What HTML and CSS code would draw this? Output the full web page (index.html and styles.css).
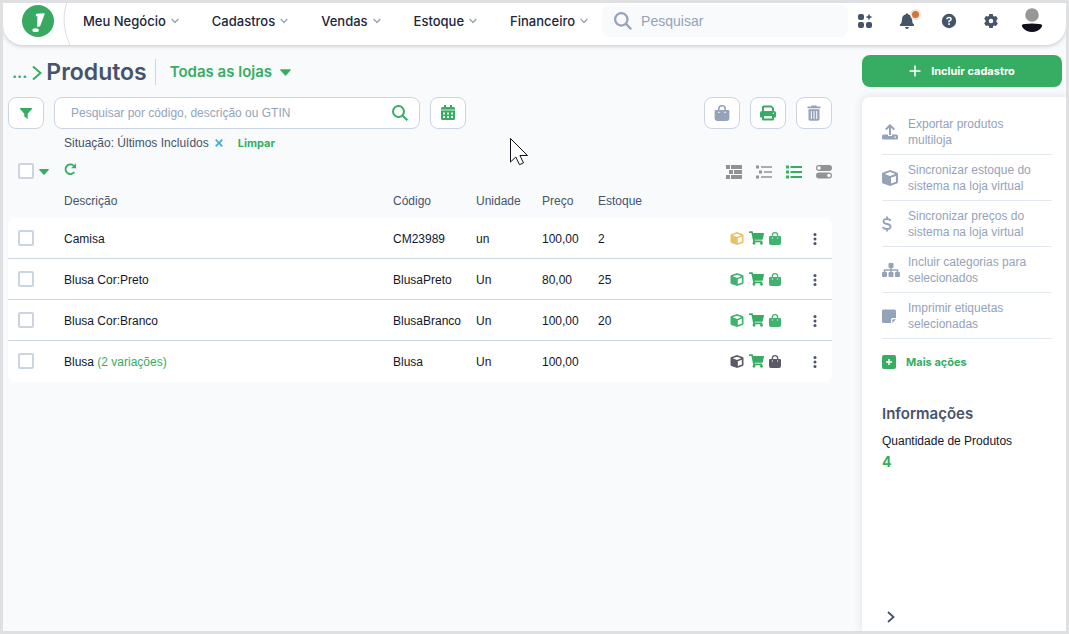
FILE: index.html
```html
<!DOCTYPE html>
<html lang="pt-BR">
<head>
<meta charset="utf-8">
<meta name="viewport" content="width=device-width, initial-scale=1">
<title>Produtos</title>
<link rel="stylesheet" href="styles.css">
</head>
<body>
<svg class="sprite" aria-hidden="true">
  <symbol id="chev" viewBox="0 0 8 6"><path d="M.7 1l3.300 3.500L7.300 1" fill="none" stroke="currentColor" stroke-width="1.300"/></symbol>
  <symbol id="caret" viewBox="0 0 10 6"><path d="M.5 0h9q.7.3.2.9L5.6 5.6q-.6.6-1.2 0L.3.9Q-.2.3.5 0z"/></symbol>
  <symbol id="search" viewBox="0 0 16 16"><path d="M11 11l4.300 4.300M12 6.500a5.500 5.500 0 1 1-11 0a5.500 5.500 0 0 1 11 0z" fill="none" stroke="currentColor" stroke-width="2"/></symbol>
  <symbol id="box" viewBox="0 0 16 16"><path fill-rule="evenodd" d="M7.300.2Q8 0 8.700.2L15 2.500q1 .4 1 1.500v8q0 1-1 1.500l-6.300 2.300q-.7.300-1.400 0L1 13.500q-1-.5-1-1.500V4q0-1.100 1-1.500zM8 2L2.700 4 8 6l5.300-2zM9 7.800v5.800l5-1.900V5.900z"/></symbol>
  <symbol id="cart" viewBox="0 0 576 512"><path d="M528.120 301.319l47.273-208C578.806 78.301 567.391 64 551.990 64H159.208l-9.166-44.810C147.758 8.021 137.930 0 126.529 0H24C10.745 0 0 10.745 0 24v16c0 13.255 10.745 24 24 24h69.883l70.248 343.435C147.325 417.100 136 435.222 136 456c0 30.928 25.072 56 56 56s56-25.072 56-56c0-15.674-6.447-29.835-16.824-40h209.647C430.447 426.165 424 440.326 424 456c0 30.928 25.072 56 56 56s56-25.072 56-56c0-22.172-12.888-41.332-31.579-50.405l5.517-24.276c3.413-15.018-8.002-29.319-23.403-29.319H218.117l-6.545-32h293.145c11.206 0 20.920-7.754 23.403-18.681z"/></symbol>
  <symbol id="bag" viewBox="0 0 12 13"><path fill-rule="evenodd" d="M2.700 4V3.300a3.300 3.300 0 0 1 6.600 0V4H11q1 0 1 1v6q0 2-2 2H2q-2 0-2-2V5q0-1 1-1zM4 4h4V3.300a2 2 0 0 0-4 0zM2.900 5.500v1h1.100v-1zM8 5.500v1h1.100v-1z"/></symbol>
  <symbol id="dots" viewBox="0 0 4 12"><circle cx="2" cy="1.600" r="1.500"/><circle cx="2" cy="6" r="1.500"/><circle cx="2" cy="10.400" r="1.500"/></symbol>
  <symbol id="plus" viewBox="0 0 12 12"><path d="M6 .5v11M.5 6h11" fill="none" stroke="currentColor" stroke-width="1.500"/></symbol>
</svg>

<header class="topbar">
  <a class="logo" href="#" aria-label="Início"><svg viewBox="0 0 32 32"><circle cx="16" cy="16" r="16" fill="#38a962"/><path d="M14.300 8.700l7.900-.5q.8 0 .5.800l-4.500 12.100q-.3.500-.8.500l-1.900.1q-.5 0-.4-.5l.3-10-1.800.1z" fill="#fff"/><ellipse cx="13.600" cy="25.200" rx="3.200" ry="1.900" fill="#fff"/></svg></a>
  <svg class="curve" viewBox="0 0 8 42" aria-hidden="true"><path d="M3.500 0Q-3 21 7 42" fill="none" stroke="#d9dee6"/></svg>
  <nav class="menu">
    <button type="button">Meu Negócio <svg><use href="#chev"/></svg></button>
    <button type="button">Cadastros <svg><use href="#chev"/></svg></button>
    <button type="button">Vendas <svg><use href="#chev"/></svg></button>
    <button type="button">Estoque <svg><use href="#chev"/></svg></button>
    <button type="button">Financeiro <svg><use href="#chev"/></svg></button>
  </nav>
  <label class="global-search"><svg><use href="#search"/></svg><input type="text" placeholder="Pesquisar" aria-label="Pesquisar"></label>
  <div class="tools">
    <button type="button" aria-label="Aplicativos"><svg viewBox="0 0 16 16"><rect x="1" y="1" width="6" height="6" rx="2"/><rect x="1" y="9" width="6" height="6" rx="2"/><rect x="9" y="9" width="6" height="6" rx="2"/><path d="M12 .5l1 2.500 2.500 1-2.500 1-1 2.500-1-2.500-2.500-1L11 3z"/></svg></button>
    <button type="button" class="bell" aria-label="Notificações"><svg viewBox="0 0 16 16"><path d="M7 1.200a1 1 0 0 1 2 0Q13 2 13 6.500q0 3.500 2 5 .5 1.500-.8 1.500H1.800Q.5 13 1 11.500q2-1.500 2-5Q3 2 7 1.200zM6 14h4q-.3 2-2 2t-2-2z"/></svg><span class="badge"></span></button>
    <button type="button" aria-label="Ajuda"><svg viewBox="0 0 16 16"><circle cx="8" cy="8" r="7.200"/><path d="M5.900 6.300Q6 4.400 8 4.400t2.200 1.700Q10.200 7.200 8 8.200v1" fill="none" stroke="#fff" stroke-width="1.500"/><rect x="7.200" y="10.200" width="1.700" height="1.700" fill="#fff"/></svg></button>
    <button type="button" aria-label="Configurações"><svg viewBox="0 0 16 16"><path fill-rule="evenodd" d="M6.300 1h3.400l.5 2 .9.500 2-.6 1.700 2.900-1.400 1.500v1.400l1.400 1.500-1.700 2.900-2-.6-.9.500-.5 2H6.300l-.5-2-.9-.5-2 .6-1.700-2.900 1.400-1.500V7.300L1.200 5.800l1.700-2.900 2 .6.900-.5zM8 5.700a2.300 2.300 0 1 0 0 4.600 2.300 2.300 0 0 0 0-4.600z"/></svg></button>
    <button type="button" class="avatar" aria-label="Conta"><svg viewBox="0 0 22 26"><circle cx="11" cy="7" r="6.800" fill="#979797"/><path d="M1 17q1-1.500 10-1.500T21 17q.7 1.200-1 3-3.500 4-9 4t-9-4q-1.700-1.800-1-3z" fill="#11101d"/></svg></button>
  </div>
</header>

<div class="page">
  <main class="main">
    <div class="title-row">
      <a class="crumb" href="#">...</a>
      <svg class="crumb-arrow" viewBox="0 0 10 16"><path d="M1 1.500L8.500 8 1 14.500" fill="none" stroke="currentColor" stroke-width="2"/></svg>
      <h1>Produtos</h1>
      <button type="button" class="stores">Todas as lojas <svg><use href="#caret"/></svg></button>
    </div>

    <div class="filters">
      <button type="button" class="square" aria-label="Filtrar"><svg viewBox="0 0 16 16"><path d="M2.500 3h11q1 .2.500 1l-4.300 4.700v5.300L6.300 11.500V8.700L2 4q-.5-.8.500-1z"/></svg></button>
      <label class="search"><input type="text" placeholder="Pesquisar por código, descrição ou GTIN" aria-label="Pesquisar produtos"><svg><use href="#search"/></svg></label>
      <button type="button" class="square" aria-label="Calendário"><svg viewBox="0 0 16 16"><path d="M4 0h2v2h4V0h2v2h1.500Q15 2 15 3.500v1H1v-1Q1 2 2.500 2H4z"/><rect x="1" y="4.500" width="14" height="1.500" opacity=".6"/><path fill-rule="evenodd" d="M1 6h14v7.500q0 1.500-1.500 1.500h-11Q1 15 1 13.500zM3 7.500v2h2v-2zM7 7.500v2h2v-2zM11 7.500v2h2v-2zM3 11v2h2v-2zM7 11v2h2v-2zM11 11v2h2v-2z"/></svg></button>
      <div class="bulk">
        <button type="button" class="square muted" aria-label="Loja virtual"><svg><use href="#bag"/></svg></button>
        <button type="button" class="square" aria-label="Imprimir"><svg viewBox="0 0 16 16"><path fill-rule="evenodd" d="M2 6V2Q2 .5 3.500.5h8L14 3v3q2 0 2 2v3.500q0 1-1 1h-1v2q0 1-1 1H3q-1 0-1-1v-2H1q-1 0-1-1V8q0-2 2-2zM4 6h8V3.500L11 2.500H4zM4 11v2.500h8V11zM12.800 7.700v1.300h1.200V7.700z"/></svg></button>
        <button type="button" class="square muted" aria-label="Excluir"><svg viewBox="0 0 16 16"><path fill-rule="evenodd" d="M1.500 1.500H5l.8-1h4.400l.8 1h3.500v1.700h-13zM2.500 4.200h11V14q0 1.700-1.700 1.700H4.200Q2.500 15.700 2.500 14zM4.800 6v8h1V6zM7.500 6v8h1V6zM10.200 6v8h1V6z"/></svg></button>
      </div>
    </div>

    <div class="applied">
      <span>Situação: Últimos Incluídos</span>
      <button type="button" class="remove" aria-label="Remover filtro"><svg viewBox="0 0 8 8"><path d="M.7.7l6.600 6.600M7.300.7L.7 7.300" fill="none" stroke="currentColor" stroke-width="1.800"/></svg></button>
      <button type="button" class="clear">Limpar</button>
    </div>

    <div class="list-tools">
      <input type="checkbox" class="check" aria-label="Selecionar todos">
      <button type="button" class="select-menu" aria-label="Opções de seleção"><svg><use href="#caret"/></svg></button>
      <button type="button" class="refresh" aria-label="Atualizar"><svg viewBox="0 0 12 12"><path d="M9.600 2.700A4.800 4.800 0 1 0 10.300 9" fill="none" stroke="currentColor" stroke-width="1.800"/><path d="M12 .3v4.900H7.200z"/></svg></button>
      <div class="views">
        <button type="button" aria-label="Blocos"><svg viewBox="0 0 16 14"><path d="M0 0h4v4H0zM5 0h11v4H5zM3 5h4v4H3zM8 5h8v4H8zM0 10h4v4H0zM5 10h11v4H5z"/></svg></button>
        <button type="button" aria-label="Hierarquia"><svg viewBox="0 0 16 14"><path d="M0 .5h3v3H0zM5 1.200h11v1.500H5zM3 5.500h3v3H3zM8 6.200h8v1.500H8zM0 10.500h3v3H0zM5 11.200h11v1.500H5z"/></svg></button>
        <button type="button" class="active" aria-label="Lista"><svg viewBox="0 0 16 14"><path d="M0 .5h3v3H0zM4.500 1h11.500v2H4.500zM0 5.500h3v3H0zM4.500 6h11.500v2H4.500zM0 10.500h3v3H0zM4.500 11h11.500v2H4.500z"/></svg></button>
        <button type="button" aria-label="Colunas"><svg viewBox="0 0 16 14"><rect width="16" height="6" rx="3"/><rect y="7.500" width="16" height="6" rx="3"/><circle cx="3" cy="3" r="1.800" fill="#f9fafc"/><circle cx="13" cy="10.500" r="1.800" fill="#f9fafc"/></svg></button>
      </div>
    </div>

    <table class="products">
      <colgroup><col class="c-check"><col><col class="c-code"><col class="c-unit"><col class="c-price"><col class="c-stock"><col class="c-actions"></colgroup>
      <thead><tr><th></th><th>Descrição</th><th>Código</th><th>Unidade</th><th>Preço</th><th>Estoque</th><th></th></tr></thead>
      <tbody>
        <tr><td><input type="checkbox" class="check" aria-label="Selecionar Camisa"></td><td>Camisa</td><td>CM23989</td><td>un</td><td>100,00</td><td>2</td>
          <td><div class="row-icons"><svg class="amber"><use href="#box"/></svg><svg class="cart"><use href="#cart"/></svg><svg class="bag"><use href="#bag"/></svg><button type="button" aria-label="Ações de Camisa"><svg><use href="#dots"/></svg></button></div></td></tr>
        <tr><td><input type="checkbox" class="check" aria-label="Selecionar Blusa Preto"></td><td>Blusa Cor:Preto</td><td>BlusaPreto</td><td>Un</td><td>80,00</td><td>25</td>
          <td><div class="row-icons"><svg><use href="#box"/></svg><svg class="cart"><use href="#cart"/></svg><svg class="bag"><use href="#bag"/></svg><button type="button" aria-label="Ações de Blusa Preto"><svg><use href="#dots"/></svg></button></div></td></tr>
        <tr><td><input type="checkbox" class="check" aria-label="Selecionar Blusa Branco"></td><td>Blusa Cor:Branco</td><td>BlusaBranco</td><td>Un</td><td>100,00</td><td>20</td>
          <td><div class="row-icons"><svg><use href="#box"/></svg><svg class="cart"><use href="#cart"/></svg><svg class="bag"><use href="#bag"/></svg><button type="button" aria-label="Ações de Blusa Branco"><svg><use href="#dots"/></svg></button></div></td></tr>
        <tr><td><input type="checkbox" class="check" aria-label="Selecionar Blusa"></td><td>Blusa <a href="#">(2 variações)</a></td><td>Blusa</td><td>Un</td><td>100,00</td><td></td>
          <td><div class="row-icons"><svg class="dark"><use href="#box"/></svg><svg class="cart"><use href="#cart"/></svg><svg class="bag dark"><use href="#bag"/></svg><button type="button" aria-label="Ações de Blusa"><svg><use href="#dots"/></svg></button></div></td></tr>
      </tbody>
    </table>
  </main>

  <aside class="side">
    <button type="button" class="primary"><svg><use href="#plus"/></svg>Incluir cadastro</button>
    <section class="panel">
      <ul class="actions">
        <li><a href="#"><svg viewBox="0 0 16 16"><path d="M8 11V2M3.800 5.500L8 1.300l4.200 4.200" fill="none" stroke="currentColor" stroke-width="2"/><path fill-rule="evenodd" d="M1.500 10.500H6V12h4v-1.500h4.500q1.500 0 1.500 1.500v2q0 1.500-1.500 1.500h-13Q0 15.500 0 14v-2q0-1.500 1.500-1.500zM12.500 12.500v1.200H14v-1.200z"/></svg><span>Exportar produtos multiloja</span></a></li>
        <li><a href="#"><svg><use href="#box"/></svg><span>Sincronizar estoque do sistema na loja virtual</span></a></li>
        <li><a href="#"><svg viewBox="0 0 16 16"><path d="M8.400 5Q8 3 5 3 1.500 3 1.500 5.200T5 8q3.600.6 3.600 2.700T5 13Q1.300 13 1 10.800M5 .5V3M5 13v2.500" fill="none" stroke="currentColor" stroke-width="1.800"/></svg><span>Sincronizar preços do sistema na loja virtual</span></a></li>
        <li><a href="#"><svg class="tree" viewBox="0 0 18 16"><rect x="6.500" y="1" width="5" height="5" rx="1"/><rect y="10" width="5" height="5" rx="1"/><rect x="6.500" y="10" width="5" height="5" rx="1"/><rect x="13" y="10" width="5" height="5" rx="1"/><path d="M9 5v5M2.500 10V8h13v2" fill="none" stroke="currentColor" stroke-width="1.500"/></svg><span>Incluir categorias para selecionados</span></a></li>
        <li><a href="#"><svg viewBox="0 0 16 16"><path d="M1.500 1.500h11Q14 1.500 14 3v7h-3.500Q9 10 9 11.500V15H1.500Q0 15 0 13.500V3q0-1.500 1.500-1.500zM10.300 15v-2.700q0-1 1-1H14z"/></svg><span>Imprimir etiquetas selecionadas</span></a></li>
      </ul>
      <button type="button" class="more"><svg viewBox="0 0 14 14"><rect width="14" height="14" rx="2"/><path d="M7 4v6M4 7h6" stroke="#fff" stroke-width="1.500"/></svg>Mais ações</button>
      <h2>Informações</h2>
      <p class="info-label">Quantidade de Produtos</p>
      <p class="info-value">4</p>
      <button type="button" class="collapse" aria-label="Recolher painel"><svg viewBox="0 0 8 12"><path d="M1 1l5.500 5L1 11" fill="none" stroke="currentColor" stroke-width="1.800"/></svg></button>
    </section>
  </aside>
</div>
<svg class="pointer" viewBox="0 0 19 28" aria-hidden="true"><path d="M.5.500v23.500l5.300-5 3.700 7.700 4-1.800-3.600-7.400h7.600z" fill="#fff" stroke="#11101d"/></svg>
</body>
</html>
```

FILE: styles.css
```css
* { box-sizing: border-box; }

body {
  margin: 0;
  min-height: 100vh;
  display: flex;
  flex-direction: column;
  border: 3px solid #dfe0e2;
  background: #f9fafc;
  color: #11182b;
  font: 12px/16px "Liberation Sans", Arial, sans-serif;
}

button {
  display: flex;
  align-items: center;
  padding: 0;
  border: 0;
  background: none;
  color: inherit;
  font: inherit;
}

input { font: inherit; }
a { color: inherit; text-decoration: none; }
svg { display: block; flex: none; fill: currentColor; }
h1, h2, p, ul { margin: 0; padding: 0; }
.sprite { position: absolute; width: 0; height: 0; }

/* Top bar */
.topbar {
  display: flex;
  align-items: center;
  height: 42px;
  padding: 0 23px 6px 19px;
  background: #fff;
  border-radius: 0 0 20px 20px;
  box-shadow: 0 1px 4px rgba(60, 75, 100, .3);
}
.logo { width: 32px; margin-right: 9px; }
.curve { align-self: flex-start; width: 8px; height: 42px; margin-right: 12px; }
.menu { display: flex; gap: 33px; }
.menu button {
  gap: 5px;
  color: #1d263b;
  font: 500 13px/20px Inter, sans-serif;
  white-space: nowrap;
}
.menu button svg { width: 8px; height: 6px; color: #94a3b8; }
.global-search {
  flex: 1;
  min-width: 0;
  display: flex;
  align-items: center;
  gap: 9px;
  height: 32px;
  margin: 0 9px 0 14px;
  padding: 0 12px;
  border-radius: 8px;
  background: #f9fafc;
  color: #94a3b8;
}
.global-search svg { width: 18px; height: 18px; }
.global-search input {
  flex: 1;
  min-width: 0;
  padding: 0;
  border: 0;
  outline: 0;
  background: none;
  font-size: 14px;
}
::placeholder { color: #94a3b8; opacity: 1; }
.tools { display: flex; align-items: center; gap: 26px; color: #45546a; }
.tools svg { width: 16px; height: 16px; }
.bell { position: relative; }
.badge {
  position: absolute;
  top: -4px;
  right: -6px;
  width: 11px;
  height: 11px;
  border: 2px solid #f3e5d9;
  border-radius: 50%;
  background: #d0763a;
}
.tools .avatar { margin-left: -4px; }
.tools .avatar svg { width: 22px; height: 26px; }

/* Page */
.page { flex: 1; display: grid; grid-template-columns: 1fr 204px; gap: 30px; padding: 10px 0 0 5px; }

.title-row { display: flex; align-items: center; height: 34px; padding-left: 4px; color: #36ad62; }
.crumb { font: 600 16px/20px Inter, sans-serif; }
.crumb-arrow { width: 10px; height: 16px; margin: 2px 4px 0 5px; }
h1 { color: #45546a; font: 600 23px/32px Inter, sans-serif; }
.stores {
  gap: 8px;
  height: 26px;
  margin-left: 8px;
  padding-left: 14px;
  border-left: 1px solid #cbd5e1;
  font: 600 15px/20px Inter, sans-serif;
}
.stores svg { width: 11px; height: 7px; }

.filters { display: flex; gap: 10px; margin-top: 8px; }
.square {
  flex: none;
  justify-content: center;
  width: 36px;
  height: 32px;
  border: 1px solid #cbd5e1;
  border-radius: 8px;
  background: #fff;
  color: #36ad62;
}
.square svg { width: 16px; height: 16px; }
.muted { color: #94a3b8; }
.search {
  flex: 0 1 366px;
  display: flex;
  align-items: center;
  height: 32px;
  padding: 0 11px 0 16px;
  border: 1px solid #cbd5e1;
  border-radius: 8px;
  background: #fff;
  color: #36ad62;
}
.search input { flex: 1; min-width: 0; padding: 0; border: 0; outline: 0; background: none; }
.search svg { width: 16px; height: 16px; }
.bulk { display: flex; gap: 10px; margin-left: auto; }

.applied { display: flex; align-items: center; margin-top: 6px; padding-left: 56px; color: #45546a; }
.remove { margin-left: 6px; color: #41b0d8; }
.remove svg { width: 8px; height: 8px; }
.clear { margin-left: 15px; color: #36ad62; font: 700 11px/16px Inter, sans-serif; }

.list-tools { display: flex; align-items: center; height: 24px; margin-top: 8px; padding-left: 10px; color: #36ad62; }
.check {
  appearance: none;
  display: block;
  width: 16px;
  height: 16px;
  margin: 0;
  border: 2px solid #cbd5e1;
  border-radius: 2px;
  background: #fff;
}
.select-menu { margin: 2px 0 0 5px; }
.select-menu svg { width: 10px; height: 6px; }
.refresh { margin: 0 0 4px 15px; }
.refresh svg { width: 12px; height: 12px; }
.views { display: flex; gap: 14px; margin: 2px 0 0 auto; color: #929292; }
.views svg { width: 16px; height: 14px; }
.views .active { color: #36ad62; }

.products { width: 100%; table-layout: fixed; border-spacing: 0; }
.c-check { width: 56px; }
.c-code { width: 83px; }
.c-unit { width: 66px; }
.c-price { width: 56px; }
.c-stock { width: 132px; }
.c-actions { width: 102px; }
.products th { height: 35px; padding: 0; color: #45546a; font-weight: 400; text-align: left; }
.products td { height: 41px; padding: 2px 0 0; background: #fff; border-bottom: 1px solid #cbd5e1; }
.products td:first-child { padding: 0 0 0 10px; }
.products td:last-child { padding: 0; }
.products tr:last-child td { border-bottom-color: #fff; }
.products tbody tr:first-child td:first-child { border-top-left-radius: 8px; }
.products tbody tr:first-child td:last-child { border-top-right-radius: 8px; }
.products tbody tr:last-child td:first-child { border-bottom-left-radius: 8px; }
.products tbody tr:last-child td:last-child { border-bottom-right-radius: 8px; }
.products a { color: #36ad62; }
.row-icons { display: flex; align-items: center; gap: 5px; color: #42b270; }
.row-icons svg { width: 14px; height: 13px; }
.row-icons .cart { width: 15px; height: 14px; color: #36ad62; }
.row-icons .bag { width: 12px; }
.row-icons .amber { color: #ecc068; }
.row-icons .dark { color: #5b5b68; }
.row-icons button { margin: 2px 15px 0 auto; color: #45546a; }
.row-icons button svg { width: 4px; height: 12px; }

/* Side column */
.side { display: flex; flex-direction: column; gap: 10px; }
.primary {
  justify-content: center;
  gap: 10px;
  height: 32px;
  margin-right: 4px;
  border-radius: 8px;
  background: #36ad62;
  color: #fff;
  font: 700 11px/16px Inter, sans-serif;
}
.primary svg { width: 12px; height: 12px; }
.panel {
  flex: 1;
  display: flex;
  flex-direction: column;
  align-items: flex-start;
  padding: 12px 14px 8px 20px;
  border-radius: 8px 0 0 0;
  background: #fff;
  box-shadow: 0 0 8px rgba(60, 75, 100, .15);
  clip-path: inset(-8px 0 0 -8px);
}
.actions { width: 100%; list-style: none; color: #94a3b8; }
.actions a { display: flex; align-items: center; padding: 7px 0 6px; border-bottom: 1px solid #e2e8f0; }
.actions span { max-width: 130px; }
.actions svg { width: 16px; height: 16px; margin-right: 10px; }
.actions .tree { width: 18px; margin-right: 8px; }
.more { gap: 10px; margin-top: 15px; color: #36ad62; font: 700 11px/16px Inter, sans-serif; }
.more svg { width: 14px; height: 14px; }
h2 { margin-top: 34px; color: #45546a; font: 600 15px/20px Inter, sans-serif; }
.info-label { margin-top: 9px; }
.info-value { margin-top: 4px; color: #36ad62; font: 700 14px/18px Inter, sans-serif; }
.collapse { margin: auto 0 0 5px; color: #45546a; }
.collapse svg { width: 8px; height: 12px; }

.pointer { position: absolute; left: 510px; top: 138px; width: 19px; height: 28px; }
```
